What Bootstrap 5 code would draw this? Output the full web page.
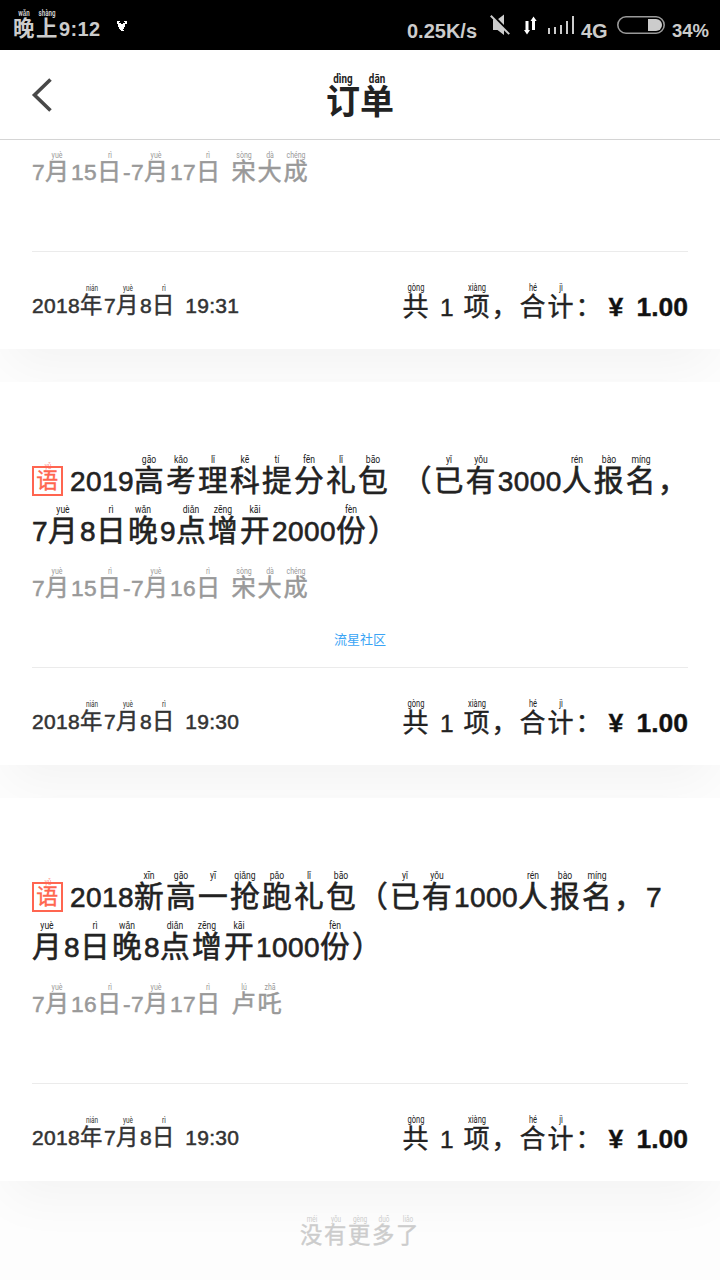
<!DOCTYPE html>
<html lang="zh-CN">
<head>
<meta charset="utf-8">
<meta name="viewport" content="width=device-width, initial-scale=1">
<title>订单</title>
<link href="https://cdn.jsdelivr.net/npm/bootstrap@5.3.0/dist/css/bootstrap.min.css" rel="stylesheet">
<style>
  body { font-family: "Liberation Sans", "Noto Sans CJK SC", sans-serif; background: #fdfdfd; color: #222; height: 1280px; overflow: hidden; }
  /* one full-width character with its pinyin above */
  ruby { display: inline-block; position: relative; font-size: .93em; width: 1.0753em; height: 1em; line-height: 1; font-family: "Noto Sans CJK SC", sans-serif; text-align: left; }
  rt { position: absolute; display: block; left: 48%; top: -.36em; font: inherit; font-family: Roboto, sans-serif; font-size: .39em; line-height: 1; white-space: nowrap; transform: translate(-50%, -50%) scaleX(.74); -webkit-text-stroke: 0; }
  .num { font-size: .875em; letter-spacing: .0154em; }
  .gap { display: inline-block; width: .37em; }
  .fit { white-space: nowrap; }

  .status { height: 50px; background: #000; color: #ccc; font-weight: 700; }
  .status svg { flex: none; display: block; }
  .clock { font-size: 23px; line-height: 57px; padding-left: 13px; width: 117px; }
  .clock .num { font-size: 20px; letter-spacing: .4px; }
  .readout { font-size: 20px; line-height: 62px; }

  .topbar { height: 90px; border-bottom: 1px solid #d5d5d5; background: #fff; }
  .topbar .side { width: 60px; padding-left: 30px; }
  .topbar h1 { font-size: 34px; line-height: 90px; font-weight: 700; padding-top: 7px; }
  .topbar ruby { font-size: 1em; width: 1em; }
  .topbar rt { left: 50%; top: -.29em; }

  .order { background: #fff; height: 383px; margin-bottom: 33px; box-shadow: 0 24px 50px -8px rgba(0,0,0,.045); }
  .order.cut { height: 209px; }
  .order-body { height: 285px; padding: 73px 32px 0; display: flow-root; }
  .cut .order-body { height: 111px; padding-top: 0; }
  .order-title { font-size: 32px; line-height: 50px; -webkit-text-stroke: .6px #222; }
  .order-title > div { height: 50px; }
  .order-sub { font-size: 26px; line-height: 30px; color: #999; margin-top: 17px; -webkit-text-stroke: .5px #999; }
  .cut .order-sub { margin-top: 16px; }
  .order-foot { height: 98px; margin: 0 32px; border-top: 1px solid #ebebeb; padding-top: 8px; }
  .order-date { font-size: 24px; color: #333; -webkit-text-stroke: .5px #333; }
  .order-date .gap { width: .38em; }
  .order-sum { font-size: 28px; -webkit-text-stroke: .4px #222; padding-top: 4px; }
  .order-sum .gap { width: .34em; }
  .price { font-weight: 700; color: #111; font-size: 26.5px; margin-left: 5px; }
  .price .gap { width: .5em; }
  .subject { width: 31px; height: 30px; border: 2px solid #ff6550; color: #ff6550; font-size: 23.500px; line-height: 1; margin-right: 7px; padding: 0 0 4px 1px; vertical-align: 3px; -webkit-text-stroke: .4px #ff6550; }
  .subject rt { opacity: .75; top: -.22em; }
  .stamp { font-family: "Noto Sans CJK SC", sans-serif; font-size: 13px; line-height: 16px; color: #3aa4f5; margin-top: 28px; }
  .finish { font-size: 24px; line-height: 30px; color: #ccc; margin-top: 39px; -webkit-text-stroke: .4px #ccc; }
</style>
</head>
<body>
<div class="status d-flex">
  <div class="clock fit flex-shrink-0"><ruby>晚<rt>wǎn</rt></ruby><ruby>上<rt>shàng</rt></ruby><span class="num">9:12</span></div>
  <svg width="11" height="50" viewBox="117 0 11 50"><path d="M117 21h3v1h-1v1h2v1h2v-1h2v-1h-1v-1h3v3h-2v3h-1v2h-1v1h1v1h-3v-1h-1v-1h-1v-2h-1v-3h-1z" fill="#fff"/></svg>
  <div class="readout fit ms-auto" style="width:83px"><span>0.25K/s</span></div>
  <svg width="20" height="50" viewBox="490 0 20 50"><path d="M493 19.5h4.500l6.500-5v20.500l-6.500-5H493z" fill="#ccc"/><path d="M491.500 14.500l19 19" stroke="#000" stroke-width="3"/><path d="M490.800 15.700l18.400 18.400" stroke="#ccc" stroke-width="2"/></svg>
  <svg width="67" height="50" viewBox="510 0 67 50"><path d="M525.500 21h3v9h1.500l-3 4.500-3-4.500h1.500zM532 30h3v-9h1.700l-3.200-4.500-3 4.500H532z" fill="#fff"/><path d="M548 28h2v6h-2zM554 27h2v7h-2zM560 25h2v9h-2zM566 21h2v13h-2zM572 16h2v18h-2z" fill="#ccc"/></svg>
  <div class="readout fit ps-1" style="width:39px">4G</div>
  <svg width="51" height="50" viewBox="616 0 51 50"><rect x="617.800" y="16.800" width="46.400" height="16.400" rx="8.200" fill="none" stroke="#999" stroke-width="1.600"/><path d="M648 19h8a6 6 0 0 1 0 12h-8z" fill="#ccc"/></svg>
  <div class="readout fit" style="width:53px;padding-left:5px;font-size:18.500px">34%</div>
</div>

<nav class="topbar d-flex">
  <div class="side"><svg width="26" height="88" viewBox="30 50 26 88"><path d="M50.500 79.500L34.500 95l16 15.500" fill="none" stroke="#484848" stroke-width="3.600"/></svg></div>
  <h1 class="flex-grow-1 text-center m-0 fit"><ruby>订<rt>dìng</rt></ruby><ruby>单<rt>dān</rt></ruby></h1>
  <div class="side"></div>
</nav>

<main>
  <section class="order cut">
    <div class="order-body">
      <div class="order-sub fit"><span class="num">7</span><ruby>月<rt>yuè</rt></ruby><span class="num">15</span><ruby>日<rt>rì</rt></ruby><span class="num">-7</span><ruby>月<rt>yuè</rt></ruby><span class="num">17</span><ruby>日<rt>rì</rt></ruby><span class="gap"></span><ruby>宋<rt>sòng</rt></ruby><ruby>大<rt>dà</rt></ruby><ruby>成<rt>chéng</rt></ruby></div>
    </div>
    <div class="order-foot d-flex justify-content-between align-items-center">
      <div class="order-date fit"><span class="num">2018</span><ruby>年<rt>nián</rt></ruby><span class="num">7</span><ruby>月<rt>yuè</rt></ruby><span class="num">8</span><ruby>日<rt>rì</rt></ruby><span class="gap"></span><span class="num">19:31</span></div>
      <div class="order-sum fit"><ruby>共<rt>gòng</rt></ruby><span class="gap"></span><span class="num">1</span><span class="gap"></span><ruby>项<rt>xiàng</rt></ruby><ruby>，</ruby><ruby>合<rt>hé</rt></ruby><ruby>计<rt>jì</rt></ruby><ruby>：</ruby><span class="price">¥<span class="gap"></span>1.00</span></div>
    </div>
  </section>

  <section class="order">
    <div class="order-body">
      <div class="order-title fit">
        <div><span class="subject d-inline-flex align-items-center justify-content-center"><ruby>语<rt>yǔ</rt></ruby></span><span class="num">2019</span><ruby>高<rt>gāo</rt></ruby><ruby>考<rt>kǎo</rt></ruby><ruby>理<rt>lǐ</rt></ruby><ruby>科<rt>kē</rt></ruby><ruby>提<rt>tí</rt></ruby><ruby>分<rt>fēn</rt></ruby><ruby>礼<rt>lǐ</rt></ruby><ruby>包<rt>bāo</rt></ruby><span class="gap"></span><ruby>（</ruby><ruby>已<rt>yǐ</rt></ruby><ruby>有<rt>yǒu</rt></ruby><span class="num">3000</span><ruby>人<rt>rén</rt></ruby><ruby>报<rt>bào</rt></ruby><ruby>名<rt>míng</rt></ruby><ruby>，</ruby></div>
        <div><span class="num">7</span><ruby>月<rt>yuè</rt></ruby><span class="num">8</span><ruby>日<rt>rì</rt></ruby><ruby>晚<rt>wǎn</rt></ruby><span class="num">9</span><ruby>点<rt>diǎn</rt></ruby><ruby>增<rt>zēng</rt></ruby><ruby>开<rt>kāi</rt></ruby><span class="num">2000</span><ruby>份<rt>fèn</rt></ruby><ruby>）</ruby></div>
      </div>
      <div class="order-sub fit"><span class="num">7</span><ruby>月<rt>yuè</rt></ruby><span class="num">15</span><ruby>日<rt>rì</rt></ruby><span class="num">-7</span><ruby>月<rt>yuè</rt></ruby><span class="num">16</span><ruby>日<rt>rì</rt></ruby><span class="gap"></span><ruby>宋<rt>sòng</rt></ruby><ruby>大<rt>dà</rt></ruby><ruby>成<rt>chéng</rt></ruby></div>
      <div class="stamp text-center">流星社区</div>
    </div>
    <div class="order-foot d-flex justify-content-between align-items-center">
      <div class="order-date fit"><span class="num">2018</span><ruby>年<rt>nián</rt></ruby><span class="num">7</span><ruby>月<rt>yuè</rt></ruby><span class="num">8</span><ruby>日<rt>rì</rt></ruby><span class="gap"></span><span class="num">19:30</span></div>
      <div class="order-sum fit"><ruby>共<rt>gòng</rt></ruby><span class="gap"></span><span class="num">1</span><span class="gap"></span><ruby>项<rt>xiàng</rt></ruby><ruby>，</ruby><ruby>合<rt>hé</rt></ruby><ruby>计<rt>jì</rt></ruby><ruby>：</ruby><span class="price">¥<span class="gap"></span>1.00</span></div>
    </div>
  </section>

  <section class="order">
    <div class="order-body">
      <div class="order-title fit">
        <div><span class="subject d-inline-flex align-items-center justify-content-center"><ruby>语<rt>yǔ</rt></ruby></span><span class="num">2018</span><ruby>新<rt>xīn</rt></ruby><ruby>高<rt>gāo</rt></ruby><ruby>一<rt>yī</rt></ruby><ruby>抢<rt>qiǎng</rt></ruby><ruby>跑<rt>pǎo</rt></ruby><ruby>礼<rt>lǐ</rt></ruby><ruby>包<rt>bāo</rt></ruby><ruby>（</ruby><ruby>已<rt>yǐ</rt></ruby><ruby>有<rt>yǒu</rt></ruby><span class="num">1000</span><ruby>人<rt>rén</rt></ruby><ruby>报<rt>bào</rt></ruby><ruby>名<rt>míng</rt></ruby><ruby>，</ruby><span class="num">7</span></div>
        <div><ruby>月<rt>yuè</rt></ruby><span class="num">8</span><ruby>日<rt>rì</rt></ruby><ruby>晚<rt>wǎn</rt></ruby><span class="num">8</span><ruby>点<rt>diǎn</rt></ruby><ruby>增<rt>zēng</rt></ruby><ruby>开<rt>kāi</rt></ruby><span class="num">1000</span><ruby>份<rt>fèn</rt></ruby><ruby>）</ruby></div>
      </div>
      <div class="order-sub fit"><span class="num">7</span><ruby>月<rt>yuè</rt></ruby><span class="num">16</span><ruby>日<rt>rì</rt></ruby><span class="num">-7</span><ruby>月<rt>yuè</rt></ruby><span class="num">17</span><ruby>日<rt>rì</rt></ruby><span class="gap"></span><ruby>卢<rt>lú</rt></ruby><ruby>吒<rt>zhā</rt></ruby></div>
    </div>
    <div class="order-foot d-flex justify-content-between align-items-center">
      <div class="order-date fit"><span class="num">2018</span><ruby>年<rt>nián</rt></ruby><span class="num">7</span><ruby>月<rt>yuè</rt></ruby><span class="num">8</span><ruby>日<rt>rì</rt></ruby><span class="gap"></span><span class="num">19:30</span></div>
      <div class="order-sum fit"><ruby>共<rt>gòng</rt></ruby><span class="gap"></span><span class="num">1</span><span class="gap"></span><ruby>项<rt>xiàng</rt></ruby><ruby>，</ruby><ruby>合<rt>hé</rt></ruby><ruby>计<rt>jì</rt></ruby><ruby>：</ruby><span class="price">¥<span class="gap"></span>1.00</span></div>
    </div>
  </section>

  <div class="finish text-center fit"><ruby>没<rt>méi</rt></ruby><ruby>有<rt>yǒu</rt></ruby><ruby>更<rt>gèng</rt></ruby><ruby>多<rt>duō</rt></ruby><ruby>了<rt>liǎo</rt></ruby></div>
</main>
<script src="https://cdn.jsdelivr.net/npm/bootstrap@5.3.0/dist/js/bootstrap.bundle.min.js"></script>
</body>
</html>
